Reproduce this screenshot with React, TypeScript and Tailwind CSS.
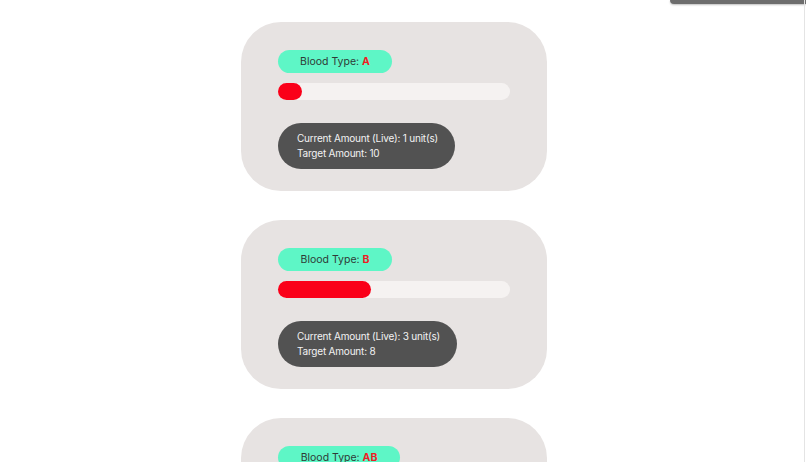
import React from "react";

const data = [
  { type: "A", fill: 24, current: 1, target: 10, boxW: 177, pillW: 114 },
  { type: "B", fill: 93, current: 3, target: 8, boxW: 179, pillW: 114 },
  { type: "AB", fill: 40, current: 2, target: 8, boxW: 179, pillW: 122 },
];

function Card({ d }: { d: (typeof data)[number] }) {
  return (
    <div className="w-[306px] h-[169px] shrink-0 rounded-[40px] bg-[#e7e3e2] pl-[37px] pt-[28px] flex flex-col items-start">
      <div
        className="h-[23px] rounded-full bg-[#5ef6c6] flex items-center justify-center text-[10.5px] text-[#2f3a36]"
        style={{ width: d.pillW }}
      >
        <span>
          Blood Type: <span className="font-bold text-[#ee1c24]">{d.type}</span>
        </span>
      </div>
      <div className="mt-[10px] w-[232px] h-[17px] rounded-full bg-[#f5f2f1]">
        <div className="h-full rounded-full bg-[#fa0019]" style={{ width: d.fill }} />
      </div>
      <div
        className="mt-[23px] h-[46px] rounded-full bg-[#525252] pl-[19px] flex flex-col justify-center text-[10px] leading-[15px] tracking-[-0.2px] text-[#f2f2f2]"
        style={{ width: d.boxW }}
      >
        <div>Current Amount (Live): {d.current} unit(s)</div>
        <div>Target Amount: {d.target}</div>
      </div>
    </div>
  );
}

export default function App() {
  return (
    <div
      className="relative w-[806px] h-[462px] overflow-hidden bg-white"
      style={{ fontFamily: "'Inter', 'Open Sans', sans-serif" }}
    >
      <div className="flex flex-col items-start pl-[241px] pt-[22px] gap-[29px]">
        {data.map((d) => (
          <Card key={d.type} d={d} />
        ))}
      </div>
      <div className="absolute top-0 right-0 w-[136px] h-[4px] rounded-bl-[4px] bg-[#6d6d6d] shadow-[0_1px_2px_rgba(0,0,0,0.25)]" />
      <div className="absolute top-0 right-[1px] w-px h-full bg-[#e4e4e4]" />
    </div>
  );
}
